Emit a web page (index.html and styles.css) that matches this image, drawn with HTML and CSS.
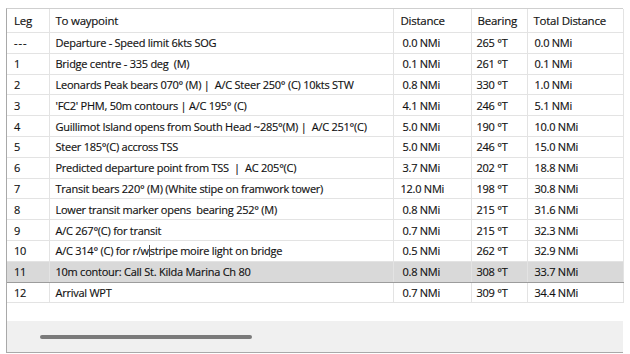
FILE: index.html
```html
<!DOCTYPE html>
<html>
<head>
<meta charset="utf-8">
<link rel="stylesheet" href="styles.css">
</head>
<body>
<div class="frame">
  <table class="grid">
    <colgroup>
      <col class="c-leg"><col class="c-wp"><col class="c-dist"><col class="c-brg"><col class="c-tot">
    </colgroup>
    <thead>
      <tr><th>Leg</th><th>To waypoint</th><th class="dist">Distance</th><th class="brg">Bearing</th><th class="tot">Total Distance</th></tr>
    </thead>
    <tbody>
      <tr><td class="dash">---</td><td>Departure - Speed limit 6kts SOG</td><td class="dist">0.0 NMi</td><td class="brg">265 °T</td><td class="tot">0.0 NMi</td></tr>
      <tr><td>1</td><td>Bridge centre - 335 deg  (M)</td><td class="dist">0.1 NMi</td><td class="brg">261 °T</td><td class="tot">0.1 NMi</td></tr>
      <tr><td>2</td><td>Leonards Peak bears 070° (M) |  A/C Steer 250° (C) 10kts STW</td><td class="dist">0.8 NMi</td><td class="brg">330 °T</td><td class="tot">1.0 NMi</td></tr>
      <tr><td>3</td><td>'FC2' PHM, 50m contours | A/C 195° (C)</td><td class="dist">4.1 NMi</td><td class="brg">246 °T</td><td class="tot">5.1 NMi</td></tr>
      <tr><td>4</td><td>Guillimot Island opens from South Head ~285°(M) |  A/C 251°(C)</td><td class="dist">5.0 NMi</td><td class="brg">190 °T</td><td class="tot">10.0 NMi</td></tr>
      <tr><td>5</td><td>Steer 185°(C) accross TSS</td><td class="dist">5.0 NMi</td><td class="brg">246 °T</td><td class="tot">15.0 NMi</td></tr>
      <tr><td>6</td><td>Predicted departure point from TSS  |  AC 205°(C)</td><td class="dist">3.7 NMi</td><td class="brg">202 °T</td><td class="tot">18.8 NMi</td></tr>
      <tr><td>7</td><td>Transit bears 220° (M) (White stipe on framwork tower)</td><td class="dist wide">12.0 NMi</td><td class="brg">198 °T</td><td class="tot">30.8 NMi</td></tr>
      <tr><td>8</td><td>Lower transit marker opens  bearing 252° (M)</td><td class="dist">0.8 NMi</td><td class="brg">215 °T</td><td class="tot">31.6 NMi</td></tr>
      <tr><td>9</td><td>A/C 267°(C) for transit</td><td class="dist">0.7 NMi</td><td class="brg">215 °T</td><td class="tot">32.3 NMi</td></tr>
      <tr><td>10</td><td>A/C 314° (C) for r/w<span class="caret"></span>stripe moire light on bridge</td><td class="dist">0.5 NMi</td><td class="brg">262 °T</td><td class="tot">32.9 NMi</td></tr>
      <tr class="sel"><td>11</td><td>10m contour: Call St. Kilda Marina Ch 80</td><td class="dist">0.8 NMi</td><td class="brg">308 °T</td><td class="tot">33.7 NMi</td></tr>
      <tr><td>12</td><td>Arrival WPT</td><td class="dist">0.7 NMi</td><td class="brg">309 °T</td><td class="tot">34.4 NMi</td></tr>
    </tbody>
  </table>
  <div class="spacer"></div>
  <div class="hscroll"><div class="thumb"></div></div>
</div>
</body>
</html>
```
FILE: styles.css
```css
html, body {
  margin: 0;
  padding: 0;
  background: #ffffff;
}
body {
  font-family: "Open Sans", "Noto Sans", sans-serif;
  font-size: 11px;
  letter-spacing: -0.25px;
  color: #111111;
}
.frame {
  margin: 8px 0 0 6px;
  width: 616px;
  height: 343px;
  border-top: 1px solid #cfcfcf;
  border-left: 1px solid #a9a9a9;
  border-bottom: 1px solid #a9a9a9;
  display: flex;
  flex-direction: column;
}
.grid {
  border-collapse: collapse;
  table-layout: fixed;
  width: 616px;
}
.c-leg { width: 42px; }
.c-wp { width: 344px; }
.c-dist { width: 78px; }
.c-brg { width: 56px; }
.c-tot { width: 96px; }
th, td {
  text-align: left;
  font-weight: 400;
  white-space: pre;
  overflow: hidden;
  padding: 0 0 0 6px;
  border-right: 1px solid #e3e3e3;
  border-bottom: 1px solid #e3e3e3;
  line-height: 15px;
  -webkit-text-stroke: 0.15px #111111;
}
th {
  height: 23px;
  font-size: 11.5px;
}
td {
  height: 19.8px;
}
th:first-child, td:first-child { padding-left: 7px; }
td.dash { letter-spacing: 1px; }
th.dist { padding-left: 7px; }
td.dist { padding-left: 9px; }
td.dist.wide { padding-left: 7px; }
th.brg { padding-left: 6px; }
td.brg { padding-left: 5px; }
th.tot { padding-left: 6px; }
td.tot { padding-left: 7px; }
tr.sel td {
  background: #d9d9d9;
  border-top: 1px solid #9c9c9c;
  border-bottom: 1px solid #9c9c9c;
}
.caret {
  display: inline-block;
  width: 1px;
  height: 12px;
  background: #555;
  vertical-align: -2px;
}
.spacer {
  flex: 1;
}
.hscroll {
  height: 31px;
  background: #f0f0f0;
  display: flex;
  align-items: center;
  padding-left: 33px;
}
.thumb {
  width: 212px;
  height: 4px;
  border-radius: 2px;
  background: #7a7a7a;
}
```
